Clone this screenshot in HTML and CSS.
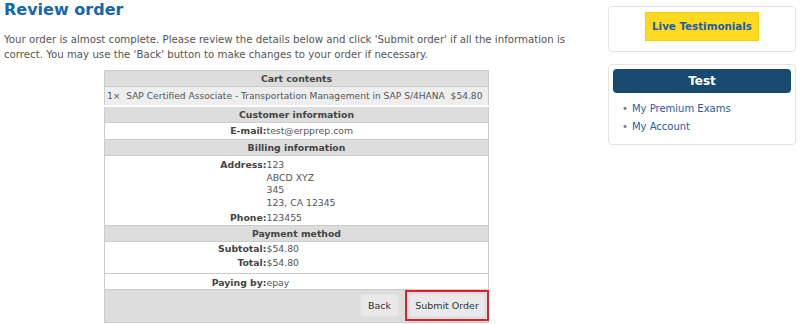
FILE: index.html
```html
<!DOCTYPE html>
<html lang="en">
<head>
  <meta charset="UTF-8">
  <title>Review order</title>
  <link rel="stylesheet" href="styles.css">
</head>
<body>
  <div class="page">
    <div class="main">
      <h1>Review order</h1>
      <p class="intro">Your order is almost complete. Please review the details below and click 'Submit order' if all the information is correct. You may use the 'Back' button to make changes to your order if necessary.</p>

      <table class="review">
        <colgroup><col class="label-col"><col></colgroup>
        <tr class="head"><td colspan="2">Cart contents</td></tr>
        <tr class="item"><td colspan="2">1× &nbsp;SAP Certified Associate - Transportation Management in SAP S/4HANA &nbsp;$54.80</td></tr>
        <tr class="head"><td colspan="2">Customer information</td></tr>
        <tr class="line single"><td class="label">E-mail:</td><td>test@erpprep.com</td></tr>
        <tr class="head"><td colspan="2">Billing information</td></tr>
        <tr class="group address"><td class="label">Address:</td><td>123<br>ABCD XYZ<br>345<br>123, CA 12345</td></tr>
        <tr class="group phone"><td class="label">Phone:</td><td>123455</td></tr>
        <tr class="head"><td colspan="2">Payment method</td></tr>
        <tr class="group subtotal"><td class="label">Subtotal:</td><td>$54.80</td></tr>
        <tr class="group total line"><td class="label">Total:</td><td>$54.80</td></tr>
        <tr class="line paying"><td class="label">Paying by:</td><td>epay</td></tr>
        <tr class="actions">
          <td colspan="2">
            <button class="btn">Back</button>
            <span class="highlight"><button class="btn submit">Submit Order</button></span>
          </td>
        </tr>
      </table>
    </div>

    <div class="sidebar">
      <div class="box promo">
        <a class="testimonials" href="#">Live Testimonials</a>
      </div>
      <div class="box menu">
        <div class="menu-title">Test</div>
        <ul>
          <li><a href="#">My Premium Exams</a></li>
          <li><a href="#">My Account</a></li>
        </ul>
      </div>
    </div>
  </div>
</body>
</html>
```

FILE: styles.css
```css
body { margin: 0; font-family: "DejaVu Sans", Verdana, sans-serif; font-size: 10px; color: #555; background: #fff; }
.page { display: flex; padding: 0 4px; }
.main { width: 590px; }
h1 { margin: 0; font-size: 16px; line-height: 20px; color: #1565b0; }
.intro { margin: 12px 0 8px; line-height: 15px; font-size: 10.2px; }

.review { border-collapse: collapse; width: 385px; table-layout: fixed; margin-left: 100px; border: 1px solid #ccc; font-size: 9.3px; }
.review .label-col { width: 162px; }
.review td { padding: 0; line-height: 12px; vertical-align: top; }
.review .head td { background: #ddd; text-align: center; font-weight: bold; color: #444; border: 1px solid #ccc; line-height: 15px; }
.review .item td { background: #eee; padding: 3px 2px 2px; font-size: 9.1px; line-height: 13px; border-bottom: 2px solid #fff; white-space: nowrap; overflow: hidden; }
.review .label { text-align: right; font-weight: bold; color: #444; }
.review .line td { border-bottom: 1px solid #ccc; }
.review .single td { padding: 2px 0; }
.review .address td { padding-top: 3px; line-height: 12.5px; }
.review .phone td { padding: 3px 0 1px; }
.review .subtotal td { padding-top: 1px; }
.review .total td { padding: 2px 0 4px; }
.review .paying td { padding: 3px 0 0; }
.review .actions td { background: #ddd; text-align: right; padding: 0 0 1px; vertical-align: middle; }

.btn { font-family: "DejaVu Sans", Verdana, sans-serif; font-size: 9.5px; color: #333; background: #e9e9e9; border: 1px solid #e2e2e2; border-radius: 3px; height: 23px; padding: 0 7px; margin: 0; vertical-align: middle; }
.highlight { display: inline-block; border: 2px solid #e3202a; padding: 2px; margin: 0 -1px 0 3px; vertical-align: middle; }
.submit { width: 76px; padding: 0; display: block; }

.sidebar { width: 188px; margin-left: 14px; padding-top: 6px; }
.box { border: 1px solid #e4e4e4; border-radius: 4px; padding: 4px; margin-bottom: 12px; text-align: center; }
.promo { padding: 5px 4px 10px; }
.testimonials { display: inline-block; background: #ffd91f; color: #1a5ea8; font-weight: bold; font-size: 10.3px; line-height: 13px; text-decoration: none; padding: 7px 6px; border: 1px dotted #f5c400; }
.menu { text-align: left; padding-bottom: 8px; }
.menu-title { background: #174a6e; color: #fff; font-weight: bold; font-size: 12px; line-height: 14px; text-align: center; border-radius: 4px; padding: 5px 0; }
.menu ul { margin: 7px 0 0; padding-left: 16px; list-style: none; }
.menu li { line-height: 18px; font-size: 10px; }
.menu li::before { content: "•"; color: #777; margin-right: 4px; margin-left: -7px; }
.menu a { color: #1a5ea8; text-decoration: none; }
```
